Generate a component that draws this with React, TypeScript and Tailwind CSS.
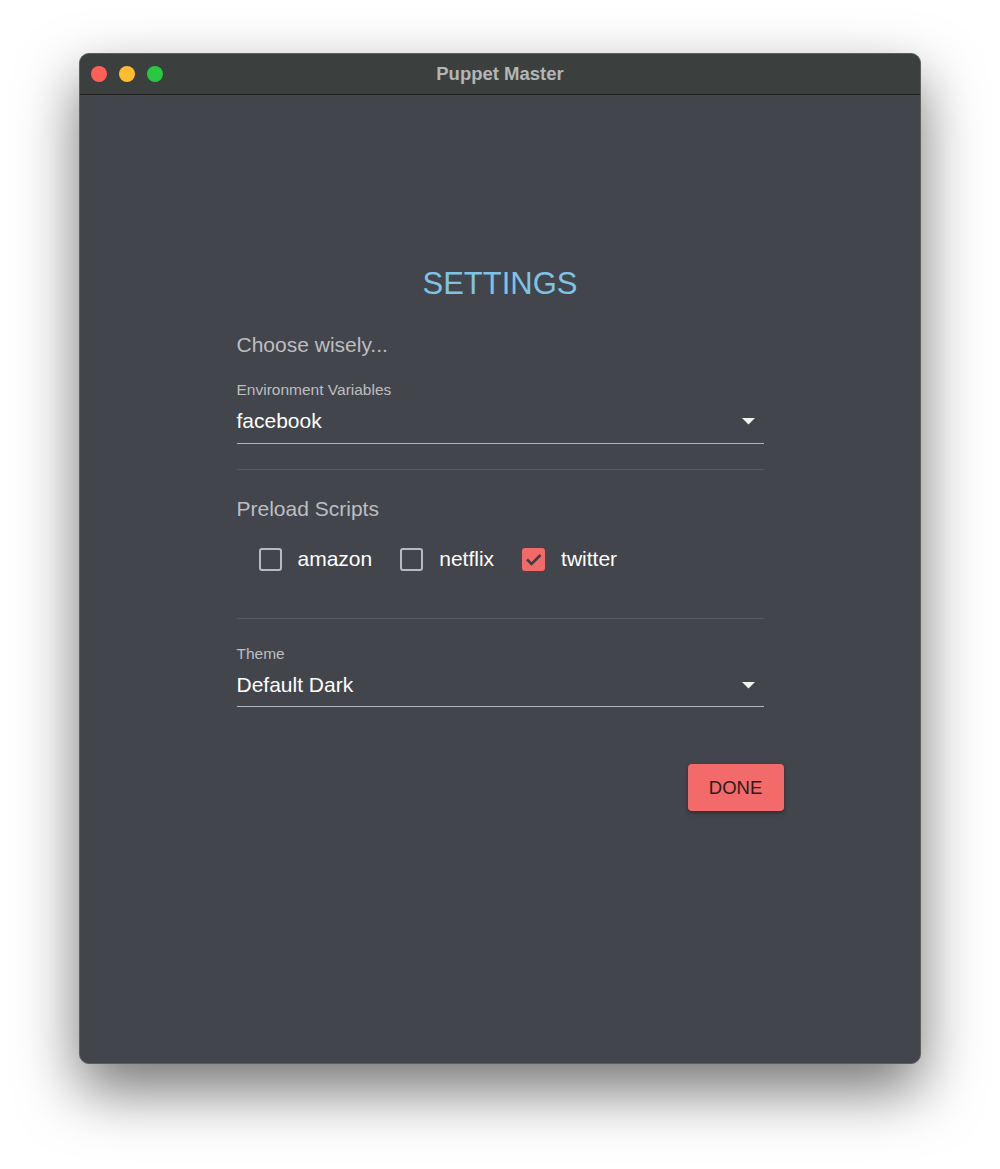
import React from "react";

const font = { fontFamily: '"Liberation Sans", Arial, sans-serif' };

function Arrow() {
  return (
    <svg width="13" height="7" viewBox="0 0 13 7" className="shrink-0">
      <path d="M0 0 L13 0 L6.5 6.5 Z" fill="#f2f2f2" />
    </svg>
  );
}

function Select({ label, value, tight }: { label: string; value: string; tight?: boolean }) {
  return (
    <div className="flex flex-col">
      <div className="text-[15.5px] leading-[18px] text-[#bdbec0]">{label}</div>
      <div
        className={`mt-[10px] flex items-center justify-between border-b border-[#b4b5b8] pr-[9px] ${
          tight ? "pb-[9px]" : "pb-[10px]"
        }`}
      >
        <span className="text-[21px] leading-[24px] text-white">{value}</span>
        <Arrow />
      </div>
    </div>
  );
}

function Check({ label, checked, gapAfter }: { label: string; checked?: boolean; gapAfter?: boolean }) {
  return (
    <div className={`flex items-center ${gapAfter ? "mr-[28px]" : ""}`}>
      {checked ? (
        <div className="flex h-[23px] w-[23px] items-center justify-center rounded-[3px] bg-[#f06a6a]">
          <svg width="23" height="23" viewBox="0 0 23 23">
            <path d="M5 11.5 L9.5 16 L18.5 7" stroke="#3d3f44" strokeWidth="2.6" fill="none" />
          </svg>
        </div>
      ) : (
        <div className="h-[23px] w-[23px] rounded-[3px] border-[2.5px] border-[#b9babc]" />
      )}
      <span className="ml-[16px] text-[21px] leading-[24px] text-white">{label}</span>
    </div>
  );
}

export default function App() {
  return (
    <div className="min-h-[1169px] w-[1000px] bg-white pt-[53px] pl-[79px]" style={font}>
      <div className="flex h-[1011px] w-[842px] flex-col overflow-hidden rounded-[10px] border border-[#5c5e60] bg-[#42454b] shadow-[0_26px_60px_rgba(0,0,0,0.55)]">
        {/* title bar */}
        <div className="relative flex h-[41px] shrink-0 items-center border-b border-[#1f2120] bg-[#3b3f3d]">
          <div className="ml-[11px] flex gap-[12px]">
            <div className="h-[16px] w-[16px] rounded-full bg-[#fe5f57]" />
            <div className="h-[16px] w-[16px] rounded-full bg-[#febc2e]" />
            <div className="h-[16px] w-[16px] rounded-full bg-[#28c840]" />
          </div>
          <div className="absolute inset-0 flex items-center justify-center text-[18.5px] font-bold text-[#b4b5b5]">
            Puppet Master
          </div>
        </div>

        {/* body */}
        <div className="mx-auto flex w-[527px] flex-col pt-[174px]">
          <h1 className="text-center text-[31px] leading-[30px] text-[#7ec3e6]">SETTINGS</h1>
          <div className="mt-[34px] text-[21px] leading-[24px] text-[#bdbec0]">Choose wisely...</div>

          <div className="mt-[24px]">
            <Select label="Environment Variables" value="facebook" />
          </div>

          <div className="mt-[25px] h-px bg-[#575a5f]" />

          <div className="mt-[27px] text-[21px] leading-[24px] text-[#bdbec0]">Preload Scripts</div>

          <div className="mt-[26px] flex items-center pl-[22px]">
            <Check label="amazon" gapAfter />
            <Check label="netflix" gapAfter />
            <Check label="twitter" checked />
          </div>

          <div className="mt-[47px] h-px bg-[#575a5f]" />

          <div className="mt-[26px]">
            <Select label="Theme" value="Default Dark" tight />
          </div>

          <div className="-mr-[20px] mt-[57px] flex justify-end">
            <button className="flex h-[47px] w-[96px] items-center justify-center rounded-[4px] bg-[#f26a6a] text-[18.5px] text-[#2a1c1c] shadow-[0_2px_4px_rgba(0,0,0,0.35)]">
              DONE
            </button>
          </div>
        </div>
      </div>
    </div>
  );
}
